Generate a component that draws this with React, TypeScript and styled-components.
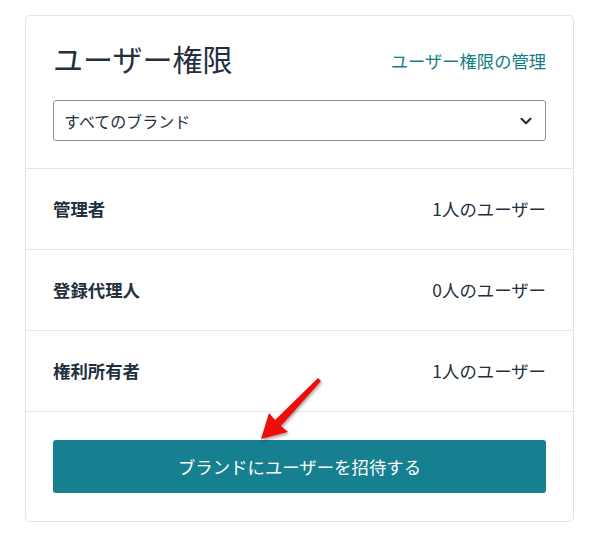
import React from "react";
import styled, { createGlobalStyle } from "styled-components";

const GlobalStyle = createGlobalStyle`
  body {
    margin: 0;
    background: #ffffff;
    font-family: "Noto Sans CJK JP", "Noto Sans", sans-serif;
    color: #232f3e;
  }
`;

const roles = [
  { name: "管理者", count: 1 },
  { name: "登録代理人", count: 0 },
  { name: "権利所有者", count: 1 },
];

const App: React.FC = () => {
  return (
    <Page>
      <GlobalStyle />
      <Card>
        <Header>
          <TitleRow>
            <Title>ユーザー権限</Title>
            <ManageLink href="#">ユーザー権限の管理</ManageLink>
          </TitleRow>
          <Select>
            <span>すべてのブランド</span>
            <svg width="14" height="14" viewBox="0 0 14 14">
              <path
                d="M2.5 4.8 L7 9.2 L11.5 4.8"
                fill="none"
                stroke="#232f3e"
                strokeWidth="2.2"
                strokeLinecap="round"
                strokeLinejoin="round"
              />
            </svg>
          </Select>
        </Header>
        {roles.map((r) => (
          <Row key={r.name}>
            <RoleName>{r.name}</RoleName>
            <RoleCount>{r.count}人のユーザー</RoleCount>
          </Row>
        ))}
        <Footer>
          <InviteButton>ブランドにユーザーを招待する</InviteButton>
        </Footer>
        <Arrow width="80" height="80" viewBox="0 0 80 80">
          <defs>
            <filter id="sh" x="-30%" y="-30%" width="160%" height="160%">
              <feDropShadow dx="1" dy="2" stdDeviation="1.5" floodColor="#000" floodOpacity="0.35" />
            </filter>
          </defs>
          <polygon
            points="6,66 14,40 20,47 63,5 66,8 26,53 33,59"
            fill="#ee1111"
            filter="url(#sh)"
          />
        </Arrow>
      </Card>
    </Page>
  );
};
export default App;

const Page = styled.div`
  padding: 15px 25px 16px 25px;
`;

const Card = styled.div`
  position: relative;
  width: 549px;
  box-sizing: border-box;
  border: 1px solid #e3e3e3;
  border-radius: 5px;
  background: #fff;
`;

const Header = styled.div`
  padding: 22px 27px 27px 27px;
`;

const TitleRow = styled.div`
  display: flex;
  justify-content: space-between;
  align-items: center;
`;

const Title = styled.h1`
  margin: 0;
  font-size: 30px;
  font-weight: 400;
  line-height: 40px;
  color: #232f3e;
`;

const ManageLink = styled.a`
  font-size: 17.3px;
  color: #157c8a;
  text-decoration: none;
  margin-top: 4px;
`;

const Select = styled.div`
  margin-top: 22px;
  height: 41px;
  box-sizing: border-box;
  border: 1px solid #8d9096;
  border-radius: 3px;
  display: flex;
  align-items: center;
  justify-content: space-between;
  padding: 0 12px 0 10px;
  font-size: 16px;
  color: #232f3e;
`;

const Row = styled.div`
  height: 81px;
  box-sizing: border-box;
  border-top: 1px solid #e7e7e7;
  display: flex;
  align-items: center;
  justify-content: space-between;
  padding: 0 27px 2px 27px;
  font-size: 17.4px;
`;

const RoleName = styled.span`
  font-weight: 700;
  color: #232f3e;
`;

const RoleCount = styled.span`
  color: #232f3e;
`;

const Footer = styled.div`
  border-top: 1px solid #e7e7e7;
  padding: 28px 27px 28px 27px;
`;

const InviteButton = styled.button`
  width: 100%;
  height: 53px;
  border: none;
  border-radius: 3px;
  background: #168090;
  color: #fff;
  font-family: "Noto Sans CJK JP", "Noto Sans", sans-serif;
  font-size: 17.4px;
  cursor: pointer;
`;

const Arrow = styled.svg`
  position: absolute;
  left: 229px;
  top: 357px;
  overflow: visible;
`;
